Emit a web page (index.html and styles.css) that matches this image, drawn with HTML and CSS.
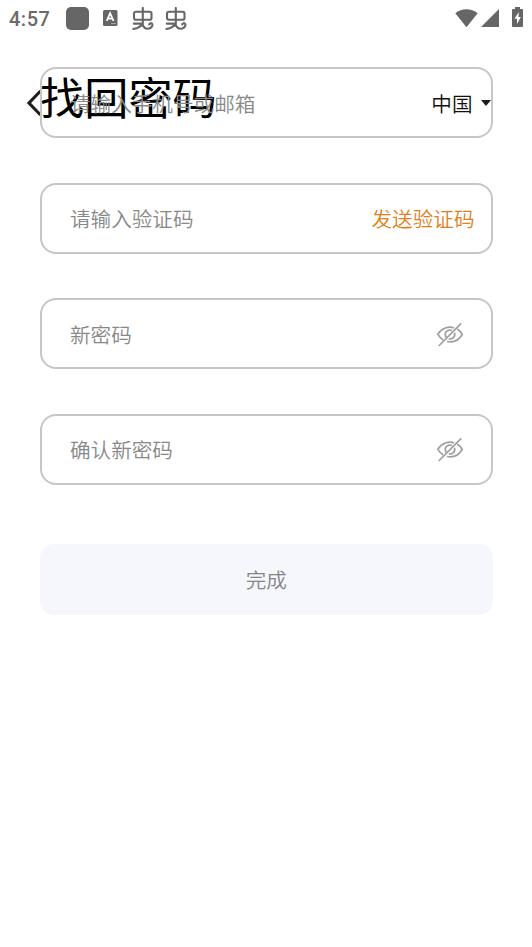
FILE: index.html
```html
<!DOCTYPE html>
<html lang="zh-CN">
<head>
<meta charset="utf-8">
<title>找回密码</title>
<link rel="stylesheet" href="styles.css">
</head>
<body>
<div class="statusbar">
  <span class="clock">4:57</span>
  <span class="app-dot"></span>
  <svg class="app-a" width="15" height="16" viewBox="0 0 15 16"><rect width="14.5" height="16" rx="1.5" fill="#666"/><path d="M3.7 11 7.1 3.2 10.6 11M5 8.6h4.2" fill="none" stroke="#fff" stroke-width="1.8"/><path d="M8 13.6h5" stroke="#aaa" stroke-width="1"/></svg>
  <svg class="bug" width="22" height="24" viewBox="0 0 22 24"><use href="#bug"/></svg>
  <svg class="bug" width="22" height="24" viewBox="0 0 22 24"><g id="bug" fill="none" stroke="#666" stroke-width="2.1" stroke-linecap="round" stroke-linejoin="round"><rect x="2" y="4.8" width="17.5" height="8" rx="1.8"/><path d="M10.8 1V17.5M1.8 16.6H8.5Q10.8 16.6 10.2 17.8C8 20 5 21.6 1.3 22M10.2 17.8C11.5 19 12 21.8 15 21.8C18.6 21.8 21 19.5 20.3 17.2C19.7 15.7 17.4 15.9 17.2 17.5"/></g></svg>
  <div class="system">
    <svg width="23" height="19" viewBox="0 0 23 19"><path d="M.3 4.3C6.8-1.1 16.2-1.1 22.7 4.3L11.5 18.3Z" fill="#666"/></svg>
    <svg width="18" height="18" viewBox="0 0 18 18"><path d="M18 0V18H0Z" fill="#666"/></svg>
    <svg class="battery" width="11" height="20" viewBox="0 0 11 20"><path d="M3 0h5v2h2q1 0 1 1v16q0 1-1 1H1q-1 0-1-1V3q0-1 1-1h2z" fill="#666"/><path d="M6.8 5 2.5 11.7H5V17L8.8 10H6.5Z" fill="#fff"/></svg>
  </div>
</div>
<header class="header">
  <svg width="17" height="28" viewBox="0 0 17 28"><path d="M14.5 2 3 14 14.5 26" fill="none" stroke="#241f1d" stroke-width="3.2"/></svg>
  <h1>找回密码</h1>
</header>
<main class="form">
  <div class="field"><span class="hint">请输入手机号或邮箱</span><span class="region">中国<i class="caret"></i></span></div>
  <div class="field"><span class="hint">请输入验证码</span><span class="send">发送验证码</span></div>
  <div class="field"><span class="hint">新密码</span><svg class="eye" width="28" height="26" viewBox="0 0 28 26"><g id="eye" fill="none" stroke="#a0a0a0" stroke-width="1.7"><path d="M18.1 6C12.5 3.9 5.7 6.2 1.8 12.2C3.2 14.8 5.1 16.7 7.2 18M11 19.5C17.3 20.8 23 18 26.2 12.5C25 10.3 23.2 8.3 21.2 7.1M16 8.5C12 7 8.6 10 9.3 13.3C9.5 14.2 9.9 14.9 10.5 15.5M18.5 10.8C19.7 14.5 16.5 17.8 12.8 16.7"/><path d="M2.7 24 25.2 1.3"/></g></svg></div>
  <div class="field"><span class="hint">确认新密码</span><svg class="eye" width="28" height="26" viewBox="0 0 28 26"><use href="#eye"/></svg></div>
  <div class="submit">完成</div>
</main>
</body>
</html>
```
FILE: styles.css
```css
* { box-sizing: border-box; }
body {
  margin: 0;
  height: 947px;
  position: relative;
  background: #fff;
  font-family: "Noto Sans CJK SC", sans-serif;
  font-size: 20.6px;
  font-weight: 350;
  overflow: hidden;
}
.statusbar {
  height: 36px;
  padding: 0 8px 0 9px;
  display: flex;
  align-items: center;
}
.clock {
  width: 57px;
  padding-top: 1px;
  font: 500 20px/36px Roboto, sans-serif;
  letter-spacing: .5px;
  color: #6a6a6a;
}
.app-dot {
  width: 23px;
  height: 23px;
  border-radius: 5px;
  background: #666;
}
.app-a { margin: 0 14px 0 13.5px; }
.bug { margin: 2px 11px 0 0; }
.system {
  display: flex;
  align-items: center;
  gap: 3px;
  margin-left: auto;
}
.battery { margin: 0 1px 2px 10px; }
.header {
  position: absolute;
  top: 64px;
  left: 26px;
  display: flex;
  align-items: center;
}
.header svg { margin: 14px -3px 0 0; }
.header h1 {
  margin: 0;
  font-size: 44.2px;
  font-weight: 400;
  line-height: 64px;
  color: #000;
}
.form {
  position: relative;
  padding: 31px 39.5px 0 40px;
}
.field {
  height: 71px;
  margin-bottom: 44.5px;
  padding: 0 16px 0 28px;
  border: 2px solid #c6c6c6;
  border-radius: 16px;
  display: flex;
  align-items: center;
  justify-content: space-between;
}
.hint { color: #888; }
.region {
  display: flex;
  align-items: center;
  gap: 8px;
  margin-right: -16px;
  color: #111;
}
.caret {
  border: 5px solid transparent;
  border-top: 6px solid #221a1c;
  border-bottom: 0;
}
.send { color: #e07f1c; }
.eye { margin: 2px 11px 0 0; }
.submit {
  height: 71px;
  margin-top: 59px;
  border-radius: 14px;
  background: #f5f7fc;
  color: #858585;
  display: flex;
  align-items: center;
  justify-content: center;
}
```
